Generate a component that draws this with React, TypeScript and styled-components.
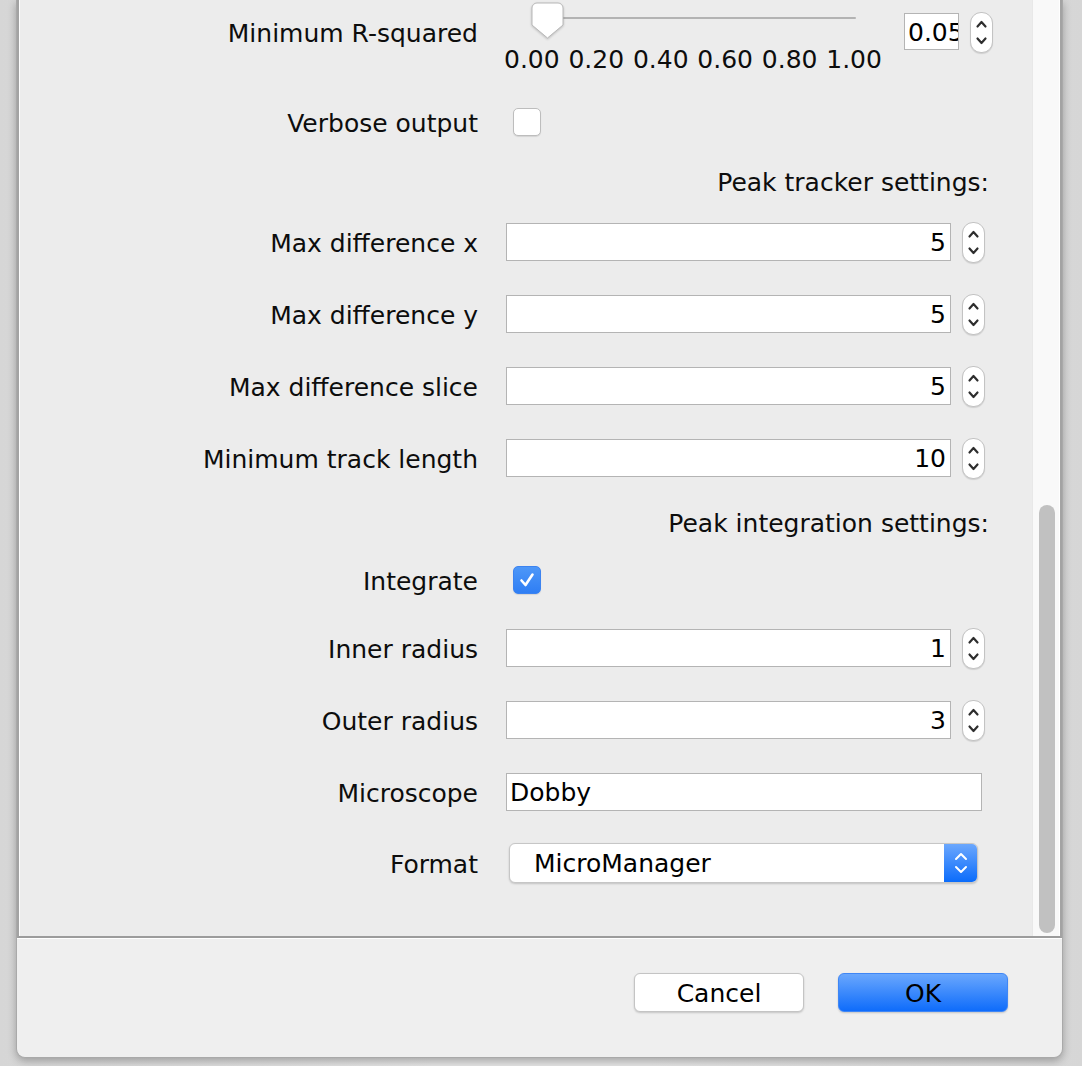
import React from "react";
import styled, { createGlobalStyle } from "styled-components";

const GlobalStyle = createGlobalStyle`
  html, body { margin: 0; padding: 0; }
  body {
    width: 1082px;
    height: 1066px;
    overflow: hidden;
    font-family: "DejaVu Sans", "Lucida Grande", sans-serif;
    background: #dcdcdc;
  }
`;

const Screen = styled.div`
  width: 1082px;
  height: 1066px;
  box-sizing: border-box;
  padding: 0 19px 8px 16px;
  display: flex;
  background: linear-gradient(90deg, #d6d6d6 0%, #e4e4e4 40%, #e4e4e4 60%, #d6d6d6 100%);
`;

const Dialog = styled.div`
  flex: 1;
  display: flex;
  flex-direction: column;
  background: #efefef;
  border: 1px solid #a9a9a9;
  border-top: none;
  border-radius: 0 0 9px 9px;
  box-shadow: 0 3px 8px rgba(0, 0, 0, 0.28);
  overflow: hidden;
`;

const ScrollPane = styled.div`
  height: 938px;
  box-sizing: border-box;
  display: flex;
  border: 2px solid #a3a3a3;
  border-top: none;
  border-bottom-color: #9c9c9c;
`;

const Viewport = styled.div`
  flex: 1;
  display: flex;
  flex-direction: column;
  background: #ececec;
  border-left: 1px solid #ffffff;
`;

const ScrollTrack = styled.div`
  width: 28px;
  display: flex;
  flex-direction: column;
  justify-content: flex-end;
  box-sizing: border-box;
  padding: 0 0 3px 6px;
  background: #f9f9f9;
  border-left: 1px solid #e8e8e8;
  border-right: 1px solid #ffffff;
`;

const ScrollThumb = styled.div`
  width: 16px;
  height: 428px;
  border-radius: 8px;
  background: #c1c1c1;
`;

const Row = styled.div<{ $h: number; $mt?: number; $align?: string }>`
  display: flex;
  align-items: ${(p) => p.$align ?? "center"};
  height: ${(p) => p.$h}px;
  margin-top: ${(p) => p.$mt ?? 0}px;
  flex-shrink: 0;
`;

const Label = styled.div<{ $pt?: number }>`
  width: 458px;
  flex-shrink: 0;
  box-sizing: border-box;
  text-align: right;
  font-size: 25px;
  line-height: 30px;
  color: #0d0d0d;
  padding-top: ${(p) => p.$pt ?? 3}px;
`;

const Controls = styled.div<{ $ml?: number; $align?: string }>`
  display: flex;
  align-items: ${(p) => p.$align ?? "center"};
  margin-left: ${(p) => p.$ml ?? 28}px;
`;

const Heading = styled.div`
  flex: 1;
  text-align: right;
  padding: 3px 43px 0 0;
  font-size: 25px;
  line-height: 30px;
  color: #0d0d0d;
`;

const Field = styled.div<{ $w: number; $left?: boolean }>`
  width: ${(p) => p.$w}px;
  height: 38px;
  box-sizing: border-box;
  background: #fff;
  border: 1px solid #b4b4b4;
  font-size: 25px;
  line-height: 34px;
  color: #000;
  text-align: ${(p) => (p.$left ? "left" : "right")};
  padding: ${(p) => (p.$left ? "2px 0 0 3px" : "2px 4px 0 0")};
  overflow: hidden;
  white-space: nowrap;
`;

const SmallField = styled.div`
  width: 55px;
  height: 37px;
  box-sizing: border-box;
  background: #fff;
  border: 1px solid #b4b4b4;
  font-size: 25px;
  line-height: 33px;
  padding: 2px 0 0 3px;
  overflow: hidden;
  white-space: nowrap;
  color: #000;
  margin-top: 13px;
`;

const StepperBox = styled.div<{ $ml?: number; $mt?: number }>`
  width: 23px;
  height: 41px;
  box-sizing: border-box;
  margin-left: ${(p) => p.$ml ?? 11}px;
  margin-top: ${(p) => p.$mt ?? 0}px;
  border: 1px solid #c3c3c3;
  border-radius: 11px;
  background: #fff;
  box-shadow: 0 1px 1px rgba(0, 0, 0, 0.12);
  display: flex;
  flex-shrink: 0;
`;

const Stepper: React.FC<{ $ml?: number; $mt?: number }> = (p) => (
  <StepperBox $ml={p.$ml} $mt={p.$mt}>
    <svg width="21" height="39" viewBox="0 0 21 39">
      <path d="M6.5 13.5 L10.5 9 L14.5 13.5" fill="none" stroke="#2e2e2e" strokeWidth="2.2" strokeLinecap="round" strokeLinejoin="round" />
      <path d="M6.5 25.5 L10.5 30 L14.5 25.5" fill="none" stroke="#2e2e2e" strokeWidth="2.2" strokeLinecap="round" strokeLinejoin="round" />
    </svg>
  </StepperBox>
);

const Check = styled.div<{ $checked?: boolean; $ml?: number }>`
  width: 28px;
  height: 28px;
  box-sizing: border-box;
  margin-left: ${(p) => p.$ml ?? 7}px;
  border-radius: 5px;
  border: 1px solid ${(p) => (p.$checked ? "#3c83f0" : "#bdbdbd")};
  background: ${(p) => (p.$checked ? "linear-gradient(#4d97f8, #2f7ef4)" : "#fff")};
  box-shadow: 0 1px 1px rgba(0, 0, 0, 0.1);
  display: flex;
  align-items: center;
  justify-content: center;
`;

const SliderBox = styled.div`
  width: 378px;
  height: 75px;
  position: relative;
  display: flex;
  flex-direction: column;
`;

const SliderTrack = styled.div`
  height: 4px;
  width: 309px;
  margin: 17px 0 0 43px;
  border-radius: 2px;
  background: #b3b3b3;
`;

const ThumbWrap = styled.div`
  position: absolute;
  left: 27px;
  top: 2px;
  filter: drop-shadow(0 1px 1px rgba(0, 0, 0, 0.2));
`;

const Ticks = styled.div`
  display: flex;
  justify-content: space-between;
  margin-top: 26px;
  font-size: 25px;
  line-height: 30px;
  color: #0d0d0d;
`;

const Combo = styled.div`
  width: 469px;
  height: 40px;
  box-sizing: border-box;
  border: 1px solid #c6c6c6;
  border-radius: 6px;
  background: #fff;
  box-shadow: 0 1px 2px rgba(0, 0, 0, 0.18);
  display: flex;
  overflow: hidden;
`;

const ComboText = styled.div`
  flex: 1;
  padding: 1px 0 0 24px;
  font-size: 25px;
  line-height: 37px;
  color: #000;
`;

const ComboArrow = styled.div`
  width: 33px;
  background: linear-gradient(#6ba7fd, #0b6cfb);
  display: flex;
  align-items: center;
  justify-content: center;
`;

const Footer = styled.div`
  flex: 1;
  border-top: 1px solid #ffffff;
  display: flex;
  justify-content: flex-end;
  align-items: flex-start;
  gap: 34px;
  padding: 34px 54px 0 0;
`;

const Button = styled.div<{ $primary?: boolean }>`
  width: 170px;
  height: 39px;
  box-sizing: border-box;
  border-radius: 6px;
  border: 1px solid ${(p) => (p.$primary ? "#3f86f5" : "#c4c4c4")};
  background: ${(p) => (p.$primary ? "linear-gradient(#6aa7fd, #0e6cfb)" : "#fff")};
  box-shadow: 0 1px 2px rgba(0, 0, 0, 0.18);
  font-size: 25px;
  line-height: 37px;
  padding-top: 1px;
  text-align: center;
  color: #000;
`;

const FieldRow: React.FC<{ label: string; value: string; mt: number }> = ({ label, value, mt }) => (
  <Row $h={38} $mt={mt}>
    <Label>{label}</Label>
    <Controls>
      <Field $w={445}>{value}</Field>
      <Stepper />
    </Controls>
  </Row>
);

export default function App() {
  return (
    <>
      <GlobalStyle />
      <Screen>
        <Dialog>
          <ScrollPane>
            <Viewport>
              <Row $h={75} $align="flex-start">
                <Label $pt={19}>Minimum R-squared</Label>
                <Controls $ml={26} $align="flex-start">
                  <SliderBox>
                    <SliderTrack />
                    <ThumbWrap>
                      <svg width="33" height="37" viewBox="0 0 33 37">
                        <path
                          d="M6 1 H27 A5 5 0 0 1 32 6 V23 L16.5 36 L1 23 V6 A5 5 0 0 1 6 1 Z"
                          fill="#ffffff"
                          stroke="#b8b8b8"
                          strokeWidth="1"
                        />
                      </svg>
                    </ThumbWrap>
                    <Ticks>
                      <span>0.00</span>
                      <span>0.20</span>
                      <span>0.40</span>
                      <span>0.60</span>
                      <span>0.80</span>
                      <span>1.00</span>
                    </Ticks>
                  </SliderBox>
                  <Controls $ml={22} $align="flex-start">
                    <SmallField>0.05</SmallField>
                    <Stepper $mt={12} />
                  </Controls>
                </Controls>
              </Row>
              <Row $h={36} $mt={29}>
                <Label>Verbose output</Label>
                <Controls>
                  <Check />
                </Controls>
              </Row>
              <Row $h={36} $mt={23}>
                <Heading>Peak tracker settings:</Heading>
              </Row>
              <FieldRow label="Max difference x" value="5" mt={24} />
              <FieldRow label="Max difference y" value="5" mt={34} />
              <FieldRow label="Max difference slice" value="5" mt={34} />
              <FieldRow label="Minimum track length" value="10" mt={34} />
              <Row $h={36} $mt={27}>
                <Heading>Peak integration settings:</Heading>
              </Row>
              <Row $h={36} $mt={22}>
                <Label>Integrate</Label>
                <Controls>
                  <Check $checked>
                    <svg width="18" height="18" viewBox="0 0 18 18">
                      <path d="M3.5 9.5 L7.5 14 L14.5 3.5" fill="none" stroke="#fff" strokeWidth="2.6" strokeLinecap="round" strokeLinejoin="round" />
                    </svg>
                  </Check>
                </Controls>
              </Row>
              <FieldRow label="Inner radius" value="1" mt={31} />
              <FieldRow label="Outer radius" value="3" mt={34} />
              <Row $h={38} $mt={34}>
                <Label>Microscope</Label>
                <Controls>
                  <Field $w={476} $left>
                    Dobby
                  </Field>
                </Controls>
              </Row>
              <Row $h={40} $mt={32}>
                <Label>Format</Label>
                <Controls $ml={31}>
                  <Combo>
                    <ComboText>MicroManager</ComboText>
                    <ComboArrow>
                      <svg width="16" height="30" viewBox="0 0 16 30">
                        <path d="M3 11 L8 6 L13 11" fill="none" stroke="#fff" strokeWidth="2" strokeLinecap="round" strokeLinejoin="round" />
                        <path d="M3 19 L8 24 L13 19" fill="none" stroke="#fff" strokeWidth="2" strokeLinecap="round" strokeLinejoin="round" />
                      </svg>
                    </ComboArrow>
                  </Combo>
                </Controls>
              </Row>
            </Viewport>
            <ScrollTrack>
              <ScrollThumb />
            </ScrollTrack>
          </ScrollPane>
          <Footer>
            <Button>Cancel</Button>
            <Button $primary>OK</Button>
          </Footer>
        </Dialog>
      </Screen>
    </>
  );
}
